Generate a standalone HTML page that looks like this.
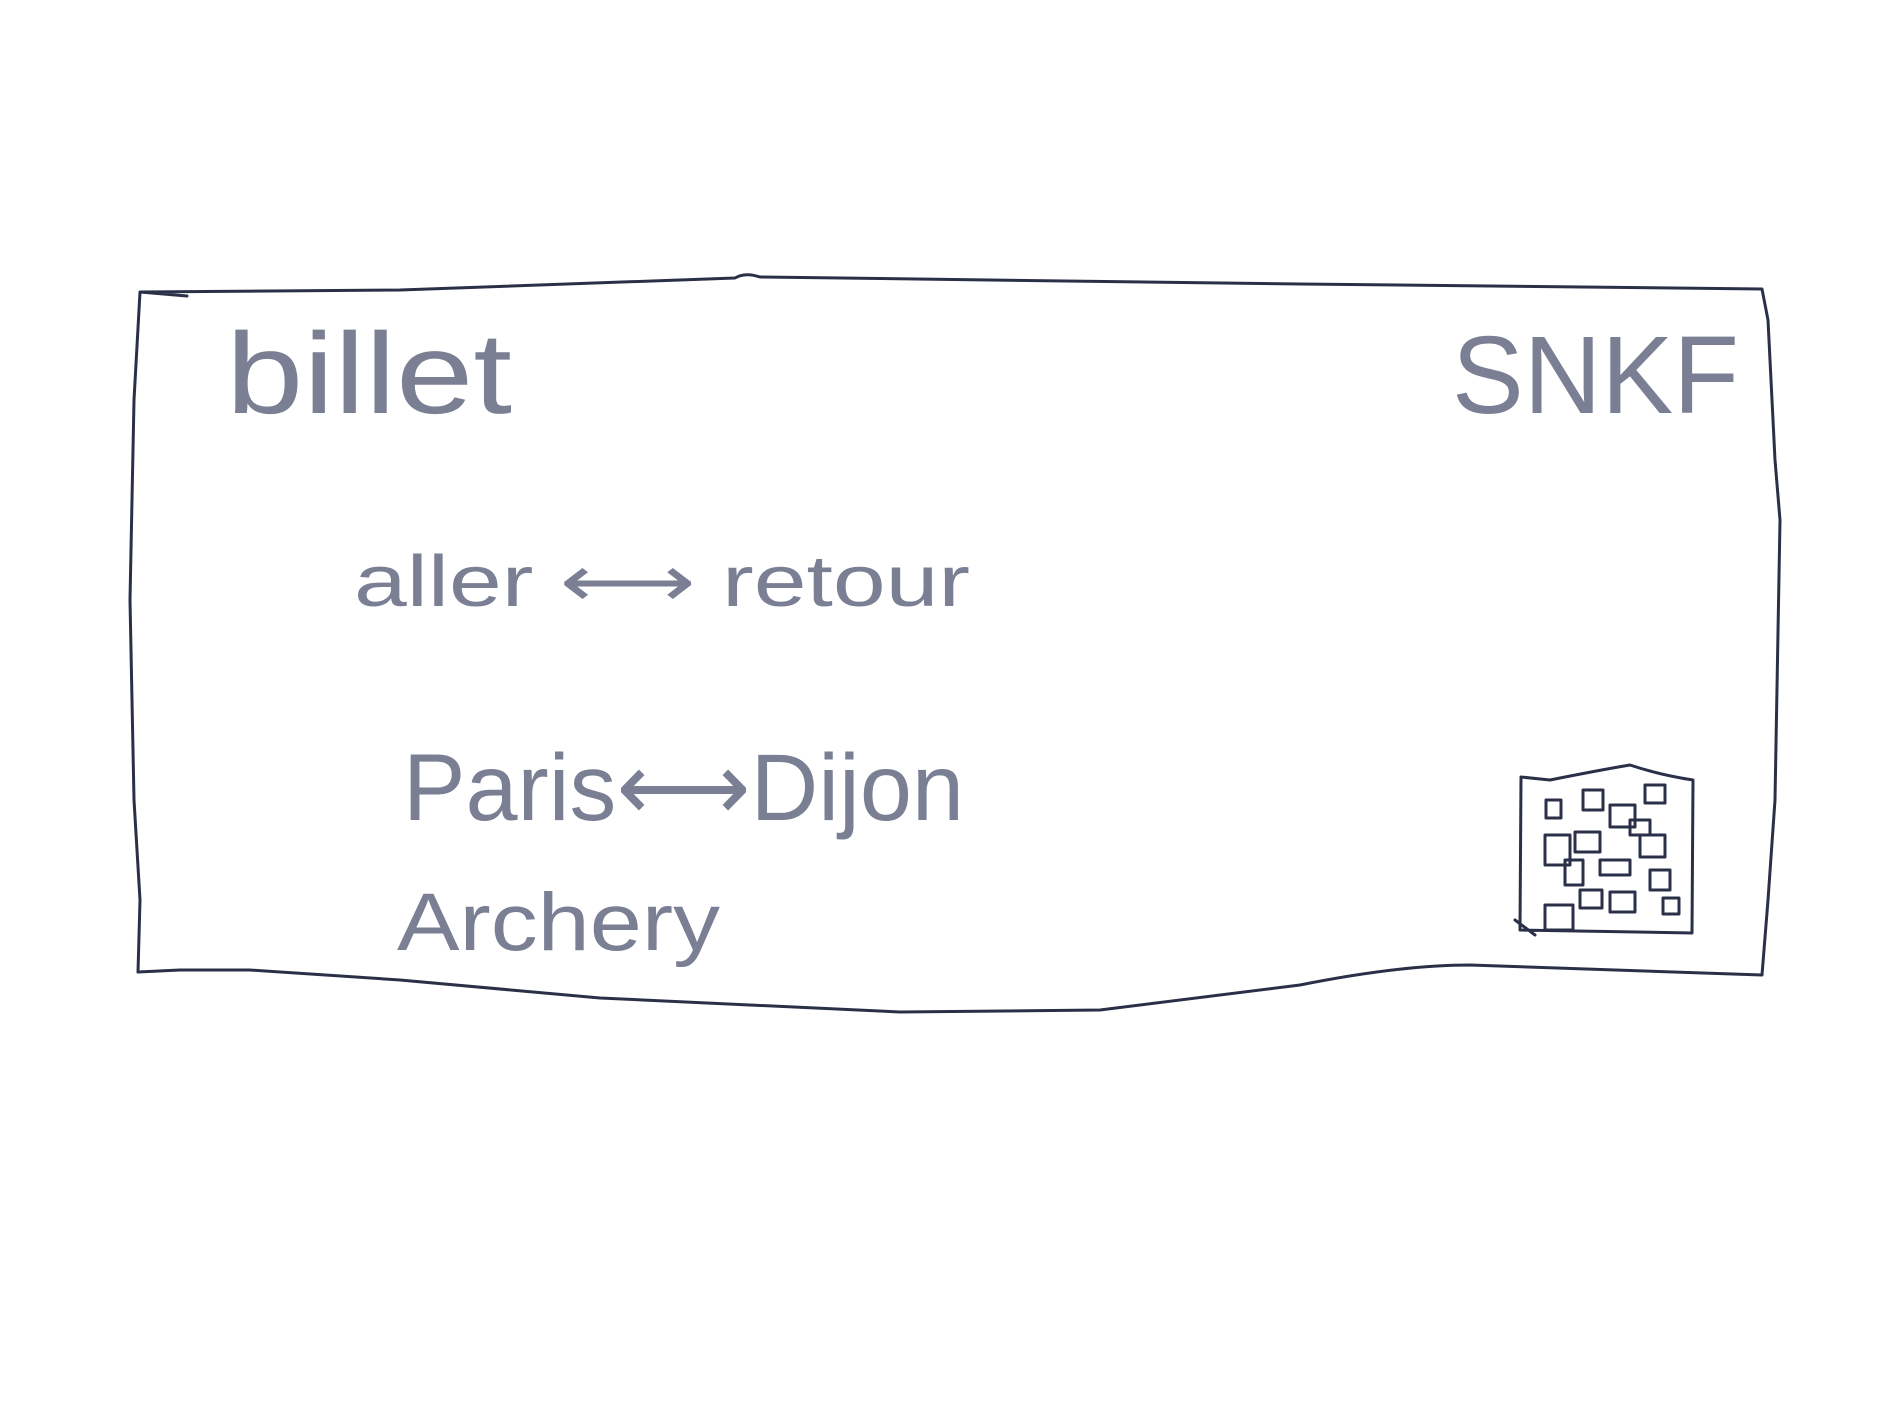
<!DOCTYPE html>
<html><head><meta charset="utf-8"><style>
html,body{margin:0;padding:0;background:#fff;}
svg{display:block}
text{font-family:"Liberation Sans",sans-serif;fill:#7a7f94;}
</style></head><body>
<svg width="1890" height="1417" viewBox="0 0 1890 1417" xmlns="http://www.w3.org/2000/svg">
<g fill="none" stroke="#2b3049" stroke-width="3" stroke-linecap="round" stroke-linejoin="round">
<path d="M140 292 L187 296 M140 292 L400 290 L735 278 Q745 272 760 277 L1300 284 L1762 289 L1768 320 L1775 460 L1780 520 L1775 800 L1768 900 L1762 975 L1470 965 Q1400 965 1300 985 L1100 1010 L900 1012 L600 998 L400 980 L250 970 L180 970 L138 972 L140 900 L134 800 L130 600 L134 400 L140 292"/>
<path d="M1521 777 L1550 780 Q1600 770 1630 765 Q1660 775 1693 780 L1692 933 L1520 930 L1521 777 M1515 920 L1535 935"/>
<path d="M1545 905 h28 v25 h-28z M1580 890 h22 v18 h-22z M1610 892 h25 v20 h-25z M1663 898 h16 v16 h-16z M1546 800 h15 v18 h-15z M1583 790 h20 v20 h-20z M1610 805 h25 v22 h-25z M1645 785 h20 v18 h-20z M1545 835 h25 v30 h-25z M1575 832 h25 v20 h-25z M1600 860 h30 v15 h-30z M1640 835 h25 v22 h-25z M1650 870 h20 v20 h-20z M1565 860 h18 v25 h-18z M1630 820 h20 v15 h-20z"/>
</g>
<text x="226" y="413" font-size="115" textLength="286" lengthAdjust="spacingAndGlyphs">billet</text>
<text x="1452" y="413" font-size="110" textLength="287" lengthAdjust="spacingAndGlyphs">SNKF</text>
<text x="354" y="606" font-size="72" textLength="616" lengthAdjust="spacingAndGlyphs">aller ⟷ retour</text>
<text x="403" y="820" font-size="95" textLength="561" lengthAdjust="spacingAndGlyphs">Paris⟷Dijon</text>
<text x="397" y="950" font-size="82" textLength="323" lengthAdjust="spacingAndGlyphs">Archery</text>
</svg>
</body></html>
